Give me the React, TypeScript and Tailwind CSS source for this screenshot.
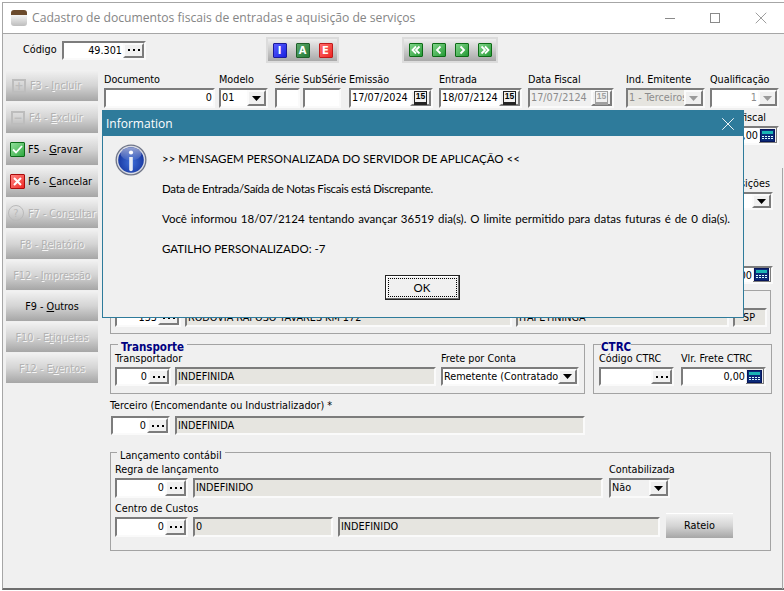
import React from 'react';
import { X } from 'lucide-react';

const tahoma = "font-['DejaVu_Sans_Condensed','DejaVu_Sans',sans-serif] text-[10.75px]";
const sunken = 'border-2 border-t-[#7c7c7c] border-l-[#7c7c7c] border-r-[#fafafa] border-b-[#fafafa]';
const raised = 'border-2 border-t-[#fbfbfb] border-l-[#fbfbfb] border-r-[#7c7c7c] border-b-[#7c7c7c] bg-[#f0f0f0]';

function Dots() {
  return (
    <span className={`${raised} flex h-full w-[21px] shrink-0 items-center justify-center gap-[3px]`}>
      <i className="h-[2px] w-[2px] bg-black" />
      <i className="h-[2px] w-[2px] bg-black" />
      <i className="h-[2px] w-[2px] bg-black" />
    </span>
  );
}

function Arrow({ off }: { off?: boolean }) {
  return (
    <span className={`${raised} flex h-full w-[19px] shrink-0 items-center justify-center`}>
      <svg width="9" height="5" viewBox="0 0 9 5">
        <path d="M0 0h9L4.5 5z" fill={off ? '#9a9a9a' : '#000'} />
      </svg>
    </span>
  );
}

function Calendar({ off }: { off?: boolean }) {
  return (
    <span className={`${raised} flex h-full w-[21px] shrink-0 items-center justify-center`}>
      <span
        className={`flex h-[14px] w-[13px] items-center justify-center border border-b-[3px] pb-px font-['Liberation_Sans',sans-serif] text-[8.5px] font-bold leading-none ${
          off ? 'border-[#a0a0a0] text-[#a0a0a0]' : 'border-[#222] text-black'
        }`}
      >
        15
      </span>
    </span>
  );
}

function Calc() {
  return (
    <span className="flex h-full w-[18px] shrink-0 items-center justify-center border-b border-r border-[#7c7c7c] bg-[#f0f0f0]">
      <svg width="15" height="13" viewBox="0 0 15 13">
        <rect x="0.5" y="0.5" width="14" height="12" fill="#0a2a78" stroke="#06155a" />
        <rect x="2" y="2" width="11" height="3" fill="#19b5b5" />
        <path d="M2 7h2v1H2zM5 7h2v1H5zM8 7h2v1H8zM11 7h2v1h-2zM2 9h2v1H2zM5 9h2v1H5zM8 9h2v1H8zM11 9h2v1h-2z" fill="#dff" />
      </svg>
    </span>
  );
}

function Input({
  w,
  h = 'h-[20px]',
  value,
  right,
  pad = 'pl-[1px]',
  bg = 'bg-white',
  color = 'text-black',
  children,
}: {
  w: string;
  h?: string;
  value?: string;
  right?: boolean;
  pad?: string;
  bg?: string;
  color?: string;
  children?: React.ReactNode;
}) {
  return (
    <div className={`${sunken} ${w} ${h} ${bg} flex shrink-0 items-stretch overflow-hidden`}>
      <span
        className={`flex-1 overflow-hidden whitespace-nowrap leading-[16px] ${color} ${
          right ? 'pr-[1px] text-right' : pad
        }`}
      >
        {value}
      </span>
      {children}
    </div>
  );
}

// labels may run wider than their input, the column keeps the input's width
function Field({
  label,
  className = '',
  labelClass = 'h-[18px] w-0 leading-[20px]',
  children,
}: {
  label: string;
  className?: string;
  labelClass?: string;
  children: React.ReactNode;
}) {
  return (
    <div className={`shrink-0 ${className}`}>
      <div className={`${labelClass} whitespace-nowrap`}>{label}</div>
      {children}
    </div>
  );
}

function SideButton({
  h,
  off,
  icon,
  align = 'justify-center gap-[3px]',
  children,
}: {
  h: string;
  off?: boolean;
  icon?: React.ReactNode;
  align?: string;
  children: React.ReactNode;
}) {
  return (
    <div
      className={`${h} ${align} flex w-[92px] items-center whitespace-nowrap bg-gradient-to-b from-[#f2f2f2] via-[#d4d4d4] to-[#a6a6a6] ${
        off ? 'text-[#b2b2b2] [text-shadow:1px_1px_0_#f6f6f6]' : 'text-black'
      }`}
    >
      {icon}
      <span className="pt-[2px]">{children}</span>
    </div>
  );
}

function Square({ bg, children }: { bg: string; children: React.ReactNode }) {
  return (
    <span
      className={`${bg} flex h-[15px] w-[14px] items-center justify-center rounded-[1px] border bg-gradient-to-br text-[11px] font-bold leading-none text-white`}
    >
      {children}
    </span>
  );
}

function NavIcon({ d }: { d: string }) {
  return (
    <span className="flex h-[14px] w-[14px] items-center justify-center rounded-[1px] border border-[#0d6b16] bg-gradient-to-br from-[#7fd68a] to-[#1f9a34]">
      <svg width="10" height="10" viewBox="0 0 10 10" fill="none" stroke="#fff" strokeWidth="1.8">
        <path d={d} />
      </svg>
    </span>
  );
}

function Group({
  className,
  legend,
  legendClass,
  children,
}: {
  className: string;
  legend?: string;
  legendClass?: string;
  children: React.ReactNode;
}) {
  return (
    <div className={`relative shrink-0 border border-[#a3a3a3] ${className}`}>
      {legend && (
        <span className={`absolute whitespace-nowrap bg-[#f0f0f0] px-[3px] leading-[12px] ${legendClass}`}>
          {legend}
        </span>
      )}
      {children}
    </div>
  );
}

function InfoIcon() {
  return (
    <svg width="32" height="32" viewBox="0 0 32 32" className="shrink-0">
      <defs>
        <radialGradient id="blue" cx="50%" cy="60%" r="60%">
          <stop offset="0%" stopColor="#3f6fd8" />
          <stop offset="100%" stopColor="#12309a" />
        </radialGradient>
        <linearGradient id="gloss" x1="0" y1="0" x2="0" y2="1">
          <stop offset="0%" stopColor="#fff" stopOpacity="0.55" />
          <stop offset="100%" stopColor="#fff" stopOpacity="0.05" />
        </linearGradient>
      </defs>
      <circle cx="16" cy="16" r="15.5" fill="#6f7588" />
      <circle cx="16" cy="16" r="14.2" fill="#d9dce4" />
      <circle cx="16" cy="16" r="12.8" fill="url(#blue)" />
      <ellipse cx="16" cy="10" rx="10.5" ry="6.5" fill="url(#gloss)" />
      <circle cx="16" cy="8.5" r="2.1" fill="#fff" />
      <path d="M14.2 13h3.6v12.5a1.8 1.8 0 0 1-3.6 0z" fill="#e8ecf4" />
    </svg>
  );
}

export default function App() {
  return (
    <div className={`${tahoma} relative h-[591px] w-[784px] overflow-hidden bg-white pl-[2px] pt-[2px] text-black`}>
      <div className="flex h-[588px] w-[782px] flex-col border-b-2 border-l border-t border-b-[#6e6e6e] border-l-[#a6a6a6] border-t-[#a6a6a6] bg-[#f0f0f0]">
        {/* title bar */}
        <div className="flex h-[31px] shrink-0 items-center border-b border-[#a6a6a6] bg-white pl-[8px]">
          <span className="flex h-[16px] w-[16px] flex-col overflow-hidden rounded-[3px]">
            <span className="h-[5px] bg-[#6b4a2c]" />
            <span className="flex-1 bg-gradient-to-b from-[#f4f4f4] to-[#bdbdbd]" />
          </span>
          <span className="ml-[5px] font-['Open_Sans',sans-serif] text-[12.15px] text-[#858585]">
            Cadastro de documentos fiscais de entradas e aquisição de serviços
          </span>
          <span className="ml-auto flex items-center pr-[13px]">
            <i className="h-px w-[10px] bg-[#8a8a8a]" />
            <i className="ml-[35px] h-[10px] w-[10px] border border-[#8a8a8a]" />
            <X className="ml-[31px] text-[#8a8a8a]" size={20} strokeWidth={1} />
          </span>
        </div>

        {/* toolbar */}
        <div className="flex h-[32px] shrink-0 items-center pl-[20px]">
          <span className="w-[39px]">Código</span>
          <Input w="w-[84px]" h="h-[19px]" value="49.301" right>
            <Dots />
          </Input>
          <div className="ml-[120px] flex h-[26px] w-[73px] items-center justify-center gap-[9px] border-2 border-[#dcdcdc] bg-gradient-to-b from-[#eeeeee] to-[#a9a9a9]">
            <Square bg="border-[#1a1a9a] from-[#5a5aff] to-[#1a1ae0]">I</Square>
            <Square bg="border-[#1f5f2a] from-[#5aa86a] to-[#237a36]">A</Square>
            <Square bg="border-[#c01a1a] from-[#ff6a6a] to-[#ee2020]">E</Square>
          </div>
          <div className="ml-[63px] flex h-[26px] w-[96px] items-center justify-center gap-[9px] border-2 border-[#dcdcdc] bg-gradient-to-b from-[#eeeeee] to-[#a9a9a9]">
            <NavIcon d="M5 1.5 1.5 5 5 8.5M8.5 1.5 5 5l3.5 3.5" />
            <NavIcon d="M6.5 1.5 3 5l3.5 3.5" />
            <NavIcon d="M3.5 1.5 7 5 3.5 8.5" />
            <NavIcon d="M1.5 1.5 5 5 1.5 8.5M5 1.5 8.5 5 5 8.5" />
          </div>
        </div>

        <div className="flex flex-1">
          {/* side buttons */}
          <div className="flex w-[95px] shrink-0 flex-col gap-px pl-[3px] pt-[4px]">
            <SideButton
              h="h-[31px]"
              off
              align="gap-[4px] pl-[6px]"
              icon={<span className="flex h-[14px] w-[14px] items-center justify-center border-2 border-[#bdbdbd] text-[12px] font-bold leading-none text-[#bdbdbd] [text-shadow:none]">+</span>}
            >
              F3 - <u>I</u>ncluir
            </SideButton>
            <SideButton
              h="h-[31px]"
              off
              align="gap-[4px] pl-[5px]"
              icon={<span className="flex h-[14px] w-[14px] items-center justify-center border-2 border-[#bdbdbd] text-[12px] font-bold leading-none text-[#bdbdbd] [text-shadow:none]">−</span>}
            >
              F4 - <u>E</u>xcluir
            </SideButton>
            <SideButton
              h="h-[31px]"
              align="gap-[3px] pl-[4px]"
              icon={
                <span className="flex h-[15px] w-[15px] items-center justify-center rounded-[1px] border border-[#0c6a18] bg-gradient-to-br from-[#8fe09a] to-[#2aa83f]">
                  <svg width="11" height="9" viewBox="0 0 11 9" fill="none" stroke="#fff" strokeWidth="1.8">
                    <path d="M1 4.5 4 7.5 10 1" />
                  </svg>
                </span>
              }
            >
              F5 - <u>G</u>ravar
            </SideButton>
            <SideButton
              h="h-[31px]"
              align="gap-[3px] pl-[4px]"
              icon={
                <span className="flex h-[15px] w-[15px] items-center justify-center rounded-[1px] border border-[#a80c0c] bg-gradient-to-br from-[#ff8080] to-[#ee2020]">
                  <svg width="9" height="9" viewBox="0 0 9 9" fill="none" stroke="#fff" strokeWidth="2">
                    <path d="M1 1l7 7M8 1 1 8" />
                  </svg>
                </span>
              }
            >
              F6 - <u>C</u>ancelar
            </SideButton>
            <SideButton
              h="h-[30px]"
              off
              align="gap-[4px] pl-[2px]"
              icon={<span className="flex h-[16px] w-[16px] items-center justify-center rounded-full border border-[#bababa] text-[11px] leading-none text-[#bababa] [text-shadow:none]">?</span>}
            >
              F7 - Con<u>s</u>ultar
            </SideButton>
            <SideButton h="h-[30px]" off>F8 - <u>R</u>elatório</SideButton>
            <SideButton h="h-[30px]" off>F12 - <u>I</u>mpressão</SideButton>
            <SideButton h="h-[30px]">F9 - <u>O</u>utros</SideButton>
            <SideButton h="h-[30px]" off>F10 - E<u>t</u>iquetas</SideButton>
            <SideButton h="h-[30px]" off>F12 - E<u>v</u>entos</SideButton>
          </div>

          {/* form */}
          <div className="flex flex-1 flex-col pl-[6px] pr-[5px] pt-[4px]">
            <div className="flex">
              <Field label="Documento">
                <Input w="w-[111px]" value="0" right />
              </Field>
              <Field label="Modelo" className="ml-[4px]">
                <Input w="w-[49px]" value="01">
                  <Arrow />
                </Input>
              </Field>
              <Field label="Série" className="ml-[7px]">
                <Input w="w-[25px]" />
              </Field>
              <Field label="SubSérie" className="ml-[3px]">
                <Input w="w-[38px]" />
              </Field>
              <Field label="Emissão" className="ml-[8px]">
                <Input w="w-[84px]" value="17/07/2024">
                  <Calendar />
                </Input>
              </Field>
              <Field label="Entrada" className="ml-[6px]">
                <Input w="w-[83px]" value="18/07/2124">
                  <Calendar />
                </Input>
              </Field>
              <Field label="Data Fiscal" className="ml-[6px]">
                <Input w="w-[86px]" value="17/07/2124" bg="bg-[#f0f0f0]" color="text-[#8c8c8c]">
                  <Calendar off />
                </Input>
              </Field>
              <Field label="Ind. Emitente" className="ml-[12px]">
                <Input w="w-[79px]" value="1 - Terceiros" bg="bg-[#e6e5e0]" color="text-[#8c8c8c]">
                  <Arrow off />
                </Input>
              </Field>
              <Field label="Qualificação" className="ml-[5px]">
                <Input w="w-[69px]" value="1" right color="text-[#8c8c8c]">
                  <Arrow off />
                </Input>
              </Field>
            </div>

            {/* right-hand fields, mostly under the dialog */}
            <div className="flex justify-end">
              <Field label="Valor fiscal" labelClass="h-[18px] pr-[13px] text-right leading-[20px]">
                <Input w="w-[90px]" h="h-[19px]" value="0,00" right>
                  <Calc />
                </Input>
              </Field>
            </div>
            <div className="mr-[6px] mt-[29px] flex justify-end">
              <Field label="Aquisições" labelClass="h-[18px] pr-[3px] text-right leading-[20px]">
                <Input w="w-[90px]" h="h-[18px]">
                  <Arrow />
                </Input>
              </Field>
            </div>
            <div className="mr-[6px] mt-[56px] flex justify-end">
              <Input w="w-[90px]" h="h-[18px]" value="0,00" right>
                <Calc />
              </Input>
            </div>

            <Group className="ml-[6px] mt-[6px] flex h-[44px] w-[661px] items-end gap-[4px] pb-[6px] pl-[4px]">
              <Input w="w-[66px]" h="h-[19px]" value="133" right>
                <Dots />
              </Input>
              <Input w="w-[327px]" h="h-[19px]" value="RODOVIA RAPOSO TAVARES KM 172" bg="bg-[#e6e5e0]" />
              <Input w="w-[213px]" h="h-[19px]" value="ITAPETININGA" bg="bg-[#e6e5e0]" />
              <Input w="w-[34px]" h="h-[19px]" value="SP" pad="pl-[8px]" bg="bg-[#e6e5e0]" />
            </Group>

            <div className="ml-[6px] mt-[10px] flex gap-[8px]">
              <Group
                className="flex h-[50px] w-[475px] pl-[4px] pt-[4px]"
                legend="Transporte"
                legendClass="left-[7px] top-[-4px] text-[11.5px] font-bold text-[#000080]"
              >
                <Field label="Transportador">
                  <div className="flex gap-[4px]">
                    <Input w="w-[56px]" h="h-[19px]" value="0" right>
                      <Dots />
                    </Input>
                    <Input w="w-[261px]" h="h-[19px]" value="INDEFINIDA" bg="bg-[#e6e5e0]" />
                  </div>
                </Field>
                <Field label="Frete por Conta" className="ml-[5px]">
                  <Input w="w-[138px]" h="h-[19px]" value="Remetente (Contratado">
                    <Arrow />
                  </Input>
                </Field>
              </Group>
              <Group
                className="flex h-[50px] w-[179px] pl-[5px] pt-[4px]"
                legend="CTRC"
                legendClass="left-[7px] top-[-4px] !px-0 text-[11.5px] font-bold text-[#000080]"
              >
                <Field label="Código CTRC">
                  <Input w="w-[75px]" h="h-[19px]">
                    <Dots />
                  </Input>
                </Field>
                <Field label="Vlr. Frete CTRC" className="ml-[7px]">
                  <Input w="w-[85px]" h="h-[19px]" value="0,00" right>
                    <Calc />
                  </Input>
                </Field>
              </Group>
            </div>

            <Field
              label="Terceiro (Encomendante ou Industrializador) *"
              className="ml-[6px] mt-[2px]"
              labelClass="h-[20px] w-0 leading-[20px]"
            >
              <div className="flex gap-[5px] pl-px">
                <Input w="w-[59px]" h="h-[19px]" value="0" right>
                  <Dots />
                </Input>
                <Input w="w-[410px]" h="h-[19px]" value="INDEFINIDA" bg="bg-[#e6e5e0]" />
              </div>
            </Field>

            <Group
              className="ml-[6px] mt-[17px] h-[99px] w-[661px] pl-[4px] pt-[7px]"
              legend="Lançamento contábil"
              legendClass="left-[6px] top-[-3px]"
            >
              <div className="flex">
                <Field label="Regra de lançamento">
                  <div className="flex gap-[5px]">
                    <Input w="w-[73px]" value="0" right>
                      <Dots />
                    </Input>
                    <Input w="w-[410px]" value="INDEFINIDO" bg="bg-[#e6e5e0]" />
                  </div>
                </Field>
                <Field label="Contabilizada" className="ml-[6px]">
                  <Input w="w-[61px]" value="Não" bg="bg-[#f0f0f0]">
                    <Arrow />
                  </Input>
                </Field>
              </div>
              <div className="mt-px flex items-end">
                <Field label="Centro de Custos">
                  <div className="flex gap-[5px]">
                    <Input w="w-[73px]" value="0" right>
                      <Dots />
                    </Input>
                    <Input w="w-[140px]" value="0" bg="bg-[#e6e5e0]" />
                    <Input w="w-[322px]" value="INDEFINIDO" bg="bg-[#e6e5e0]" />
                  </div>
                </Field>
                <div className="-mb-px ml-[6px] flex h-[25px] w-[67px] items-center justify-center border-t border-white bg-gradient-to-b from-[#f2f2f2] via-[#d4d4d4] to-[#a6a6a6]">
                  Rateio
                </div>
              </div>
            </Group>
          </div>
        </div>
      </div>

      {/* page edge that starts below the dialog's top */}
      <div className="absolute bottom-[2px] right-px top-[168px] w-px bg-[#a6a6a6]" />

      {/* message dialog */}
      <div className="absolute left-[102px] top-[110px] flex h-[208px] w-[642px] flex-col border border-[#2e7b9b] bg-[#f0f0f0] font-['Lato',sans-serif] text-[11.5px] text-black">
        <div className="flex h-[25px] shrink-0 items-center justify-between bg-[#2e7b9b] pl-[3px] pr-[4px] text-white">
          <span className="font-['Open_Sans',sans-serif] text-[12px]">Information</span>
          <X size={22} strokeWidth={1} />
        </div>
        <div className="flex pl-[12px] pt-[8px]">
          <InfoIcon />
          <div className="ml-[15px] whitespace-nowrap leading-[30px]">
            <div>&gt;&gt; MENSAGEM PERSONALIZADA DO SERVIDOR DE APLICAÇÃO &lt;&lt;</div>
            <div className="tracking-[-0.3px]">Data de Entrada/Saída de Notas Fiscais está Discrepante.</div>
            <div className="[word-spacing:1px]">Você informou 18/07/2124 tentando avançar 36519 dia(s). O limite permitido para datas futuras é de 0 dia(s).</div>
            <div>GATILHO PERSONALIZADO: -7</div>
          </div>
        </div>
        <div className="mr-[2px] mt-[11px] flex justify-center">
          <div className="flex h-[25px] w-[75px] border border-[#222] bg-[#f0f0f0] p-px shadow-[inset_-1px_-1px_0_#6f6f6f,inset_1px_1px_0_#fff]">
            <div className="m-px flex flex-1 items-center justify-center border border-dotted border-black">OK</div>
          </div>
        </div>
      </div>
    </div>
  );
}
